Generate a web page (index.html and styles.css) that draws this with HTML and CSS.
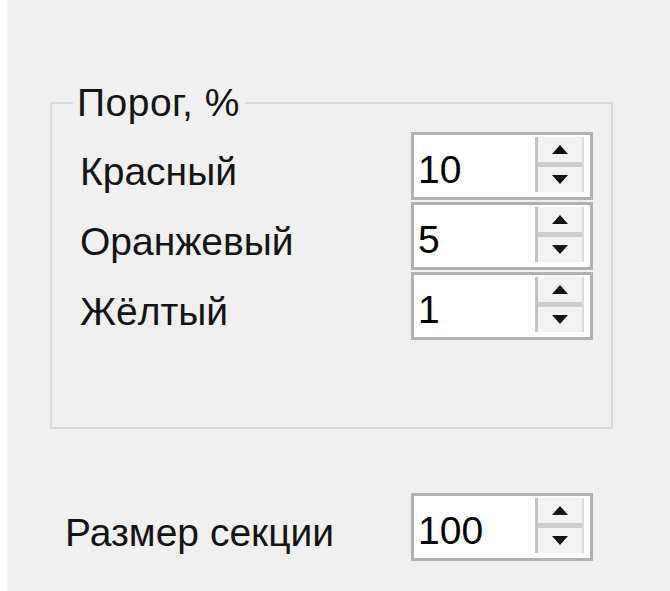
FILE: index.html
```html
<!DOCTYPE html>
<html lang="ru">
<head>
<meta charset="utf-8">
<title>Пороги</title>
<link rel="stylesheet" href="styles.css">
</head>
<body>
<div class="window">
  <fieldset class="group">
    <legend class="group-title">Порог, %</legend>
    <div class="row">
      <span class="label">Красный</span>
      <div class="spin">
        <span class="spin-value">10</span>
        <div class="spin-buttons">
          <span class="spin-btn up"><i class="arrow-up"></i></span>
          <span class="spin-btn down"><i class="arrow-down"></i></span>
        </div>
      </div>
    </div>
    <div class="row">
      <span class="label">Оранжевый</span>
      <div class="spin">
        <span class="spin-value">5</span>
        <div class="spin-buttons">
          <span class="spin-btn up"><i class="arrow-up"></i></span>
          <span class="spin-btn down"><i class="arrow-down"></i></span>
        </div>
      </div>
    </div>
    <div class="row">
      <span class="label">Жёлтый</span>
      <div class="spin">
        <span class="spin-value">1</span>
        <div class="spin-buttons">
          <span class="spin-btn up"><i class="arrow-up"></i></span>
          <span class="spin-btn down"><i class="arrow-down"></i></span>
        </div>
      </div>
    </div>
  </fieldset>

  <div class="row section-row">
    <span class="label">Размер секции</span>
    <div class="spin">
      <span class="spin-value">100</span>
      <div class="spin-buttons">
        <span class="spin-btn up"><i class="arrow-up"></i></span>
        <span class="spin-btn down"><i class="arrow-down"></i></span>
      </div>
    </div>
  </div>
</div>
</body>
</html>
```

FILE: styles.css
```css
html, body {
  margin: 0;
  padding: 0;
  background: #ffffff;
}

body {
  font-family: "Liberation Sans", Arial, sans-serif;
  font-size: 39px;
  color: #141414;
}

.window {
  margin-left: 7px;
  min-height: 591px;
  background: #f0f0f0;
  padding-top: 80px;
  box-sizing: border-box;
  overflow: hidden;
}

/* group box */
.group {
  margin: 0 0 0 43px;
  width: 563px;
  box-sizing: border-box;
  border: 2px solid #dadada;
  padding: 7px 0 87px 26px;
  display: flex;
  flex-direction: column;
  gap: 2px;
}

.group-title {
  margin-left: -5px;
  padding: 0 5px 0 4px;
  line-height: 45px;
  height: 45px;
  letter-spacing: 0.5px;
}

.row {
  display: grid;
  grid-template-columns: 333px 182px;
  align-items: center;
  height: 68px;
}

.label {
  line-height: 45px;
  padding-top: 10px;
  padding-left: 2px;
}

.section-row {
  margin-top: 64px;
  padding-left: 58px;
  grid-template-columns: 346px 182px;
}

.section-row .label {
  padding-left: 0;
}

/* numeric up-down */
.spin {
  box-sizing: border-box;
  width: 182px;
  height: 68px;
  border: 3px solid #b2b2b2;
  background: #ffffff;
  display: flex;
  align-items: stretch;
  justify-content: space-between;
  padding: 2px 6px 5px 4px;
}

.spin-value {
  line-height: 50px;
  padding-top: 8px;
  color: #000;
}

.spin-buttons {
  width: 49px;
  display: flex;
  flex-direction: column;
  border-left: 3px solid #c2c2c2;
  border-right: 2px solid #dcdcdc;
  box-sizing: border-box;
}

.spin-btn {
  flex: 1;
  display: flex;
  align-items: center;
  justify-content: center;
  background: #f2f2f2;
}

.spin-btn.up {
  border-bottom: 5px solid #cdcdcd;
}

.arrow-up, .arrow-down {
  width: 0;
  height: 0;
  border-left: 8px solid transparent;
  border-right: 8px solid transparent;
}

.arrow-up {
  border-bottom: 9px solid #111;
}

.arrow-down {
  border-top: 9px solid #111;
}
```
